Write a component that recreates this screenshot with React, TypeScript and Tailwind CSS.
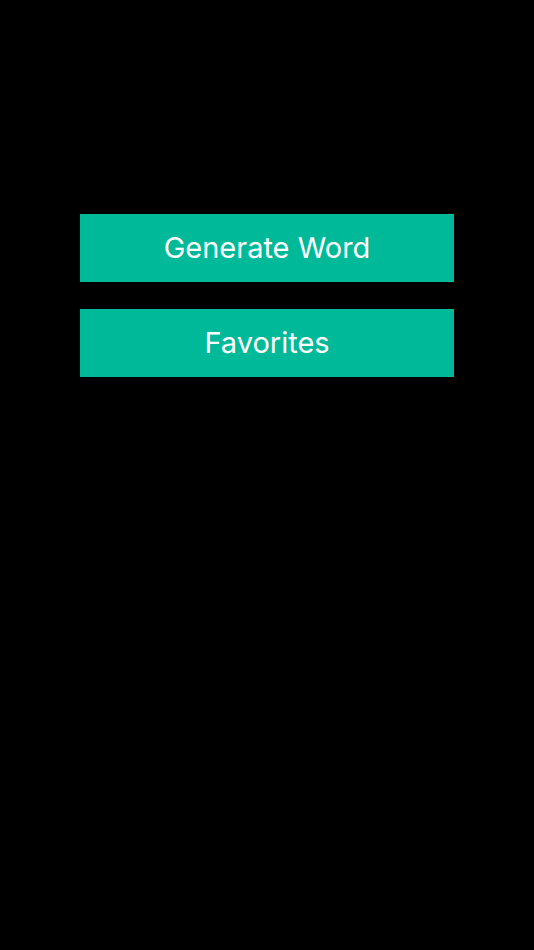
export default function App() {
  const buttons = ['Generate Word', 'Favorites']

  return (
    <div className="h-[950px] w-full bg-black font-['Inter','Noto_Sans',sans-serif]">
      <div className="flex flex-col gap-[27px] px-[80px] pt-[214px]">
        {buttons.map(label => (
          <button
            key={label}
            type="button"
            className="flex h-[68px] w-full items-center justify-center bg-[#00b998] text-[29px] font-normal text-white"
          >
            {label}
          </button>
        ))}
      </div>
    </div>
  )
}
